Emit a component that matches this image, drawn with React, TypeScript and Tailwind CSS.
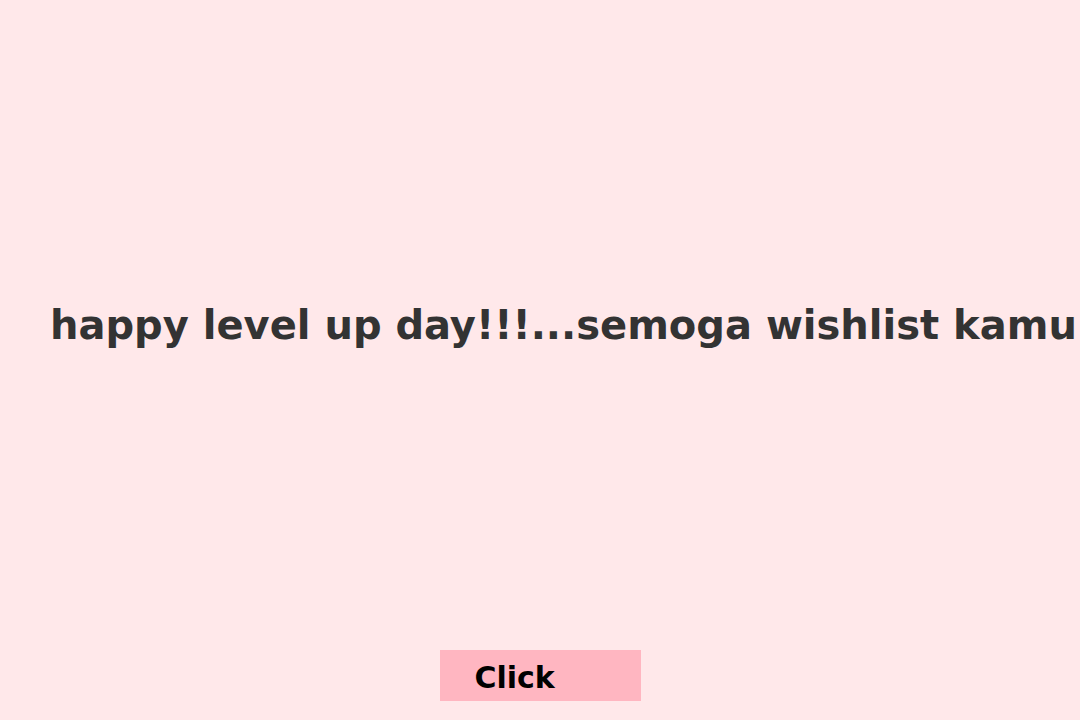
export default function App() {
  return (
    <div className="h-[720px] w-full flex flex-col bg-[#ffe8ea] overflow-hidden font-['DejaVu_Sans',sans-serif]">
      <div className="flex-1 flex items-center pl-[50px]">
        <h1 className="text-[40px] font-bold text-[#333333] whitespace-nowrap leading-none">
          happy level up day!!!...semoga wishlist kamu
        </h1>
      </div>
      <div className="flex justify-center mb-[19px]">
        <button className="w-[201px] h-[51px] bg-[#ffb6c1] text-black text-[30px] font-bold text-left pl-[35px] pt-[5px] leading-none">
          Click
        </button>
      </div>
    </div>
  );
}
